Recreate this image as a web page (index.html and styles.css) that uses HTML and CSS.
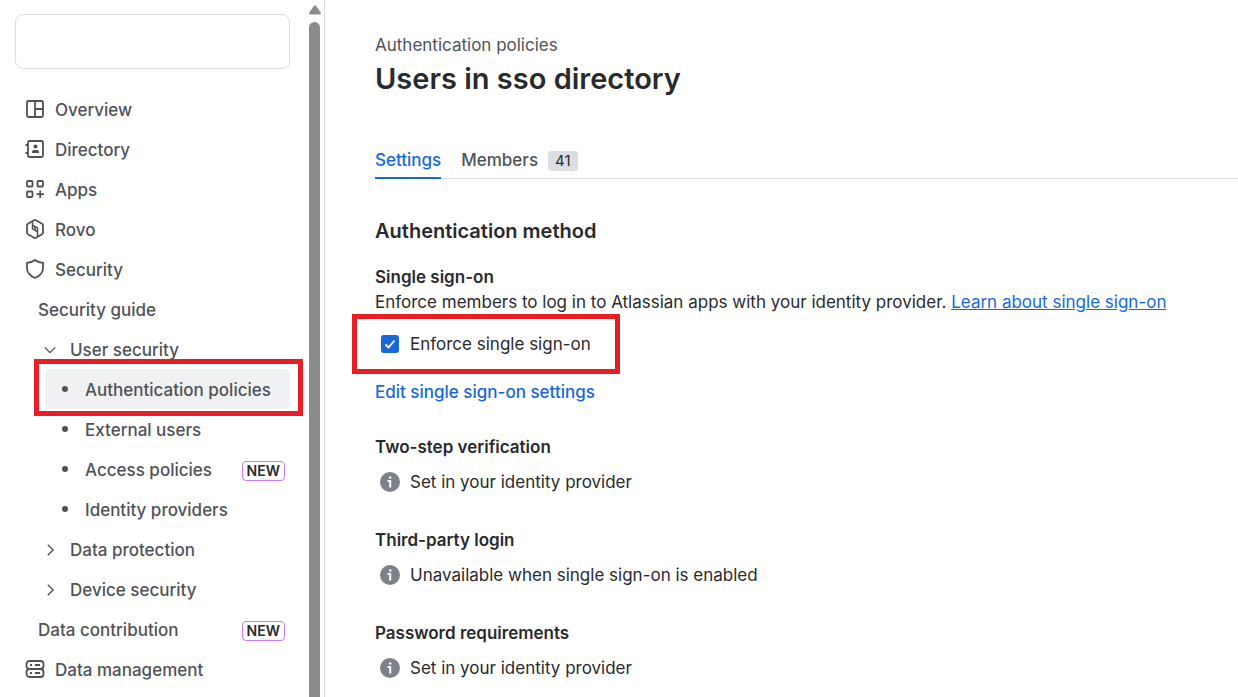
FILE: index.html
```html
<!DOCTYPE html>
<html lang="en">
<head>
    <meta charset="UTF-8">
    <meta name="viewport" content="width=device-width, initial-scale=1.0">
    <title>Authentication policies</title>
    <link rel="stylesheet" href="styles.css">
</head>
<body>
    <aside class="sidebar">
        <nav class="nav">
            <button class="org-switcher" type="button" aria-label="Switch organization"></button>
            <ul class="menu">
                <li><a class="item" href="#">
                    <svg class="icon" viewBox="0 0 20 20"><rect x="2" y="2" width="16" height="16" rx="1.5"/><path d="M10 2v16M10 10h8"/></svg>
                    Overview</a></li>
                <li><a class="item" href="#">
                    <svg class="icon" viewBox="0 0 20 20"><rect x="3" y="2" width="15" height="16" rx="1.5"/><path d="M0.5 6H3M0.5 14H3"/><circle class="solid" cx="10.5" cy="7.5" r="2"/><path class="solid" d="M7 14v-1.2c0-1.2.9-1.8 2-1.8h3c1.1 0 2 .6 2 1.8V14z"/></svg>
                    Directory</a></li>
                <li><a class="item" href="#">
                    <svg class="icon" viewBox="0 0 20 20"><rect x="2" y="2" width="5.5" height="5.5" rx="1"/><rect x="12.5" y="2" width="5.5" height="5.5" rx="1"/><rect x="2" y="12.5" width="5.5" height="5.5" rx="1"/><path d="M15.2 11.5v7.5M11.5 15.2H19"/></svg>
                    Apps</a></li>
                <li><a class="item" href="#">
                    <svg class="icon" viewBox="0 0 20 20"><path d="M9 1.300a2 2 0 0 1 2 0l6 3.500a2 2 0 0 1 1 1.800v6.800a2 2 0 0 1-1 1.800l-6 3.500a2 2 0 0 1-2 0l-6-3.500a2 2 0 0 1-1-1.800V6.600a2 2 0 0 1 1-1.800z"/><path class="thin" d="M7.500 2.500v7.300l5 3V18M7.500 6.200l5 2.800v4M10 7.600v3.800"/></svg>
                    Rovo</a></li>
                <li><a class="item" href="#">
                    <svg class="icon" viewBox="0 0 20 20"><path d="M10 1c2 1.700 4.500 2.600 8 2.800v5.200c0 4.500-3 8-8 10-5-2-8-5.500-8-10V3.800C5.500 3.600 8 2.700 10 1z"/></svg>
                    Security</a>
                    <ul class="submenu">
                        <li><a class="item" href="#">Security guide</a></li>
                        <li><a class="item group" href="#">
                            <svg class="chevron" viewBox="0 0 16 16"><path d="M2 5l6 6 6-6"/></svg>
                            User security</a>
                            <ul class="leaves">
                                <li><a class="item leaf selected" href="#" aria-current="page"><span class="dot"></span>Authentication policies</a></li>
                                <li><a class="item leaf" href="#"><span class="dot"></span>External users</a></li>
                                <li><a class="item leaf" href="#"><span class="dot"></span>Access policies<span class="lozenge">NEW</span></a></li>
                                <li><a class="item leaf" href="#"><span class="dot"></span>Identity providers</a></li>
                            </ul>
                        </li>
                        <li><a class="item group" href="#">
                            <svg class="chevron" viewBox="0 0 16 16"><path d="M5.500 2l6 6-6 6"/></svg>
                            Data protection</a></li>
                        <li><a class="item group" href="#">
                            <svg class="chevron" viewBox="0 0 16 16"><path d="M5.500 2l6 6-6 6"/></svg>
                            Device security</a></li>
                        <li><a class="item" href="#">Data contribution<span class="lozenge">NEW</span></a></li>
                    </ul>
                </li>
                <li><a class="item" href="#">
                    <svg class="icon" viewBox="0 0 20 20"><rect x="1.500" y="2" width="17" height="8" rx="3"/><rect x="1.500" y="10" width="17" height="8" rx="3"/><path d="M5 6h2M10 6h5M5 14h2M10 14h5"/></svg>
                    Data management</a></li>
            </ul>
        </nav>
        <div class="scrollbar">
            <svg class="scroll-up" viewBox="0 0 12 10"><path d="M5 .8a1.300 1.300 0 0 1 2 0l4.700 6.700c.6 1-.1 2-1 2H1.300c-.9 0-1.600-1-1-2z"/></svg>
            <div class="scroll-thumb"></div>
        </div>
    </aside>

    <main class="content">
        <a class="breadcrumb" href="#">Authentication policies</a>
        <h1>Users in sso directory</h1>

        <div class="tabs" role="tablist">
            <button class="tab active" type="button" role="tab" aria-selected="true">Settings</button>
            <button class="tab" type="button" role="tab" aria-selected="false">Members <span class="badge">41</span></button>
        </div>

        <h2>Authentication method</h2>

        <section class="setting sso">
            <h3>Single sign-on</h3>
            <p>Enforce members to log in to Atlassian apps with your identity provider. <a class="learn" href="#">Learn about single sign-on</a></p>
            <label class="check" for="enforceSso">
                <input type="checkbox" id="enforceSso" checked>
                Enforce single sign-on
            </label>
            <a class="edit" href="#">Edit single sign-on settings</a>
        </section>

        <section class="setting">
            <h3>Two-step verification</h3>
            <p class="info"><svg class="info-icon" viewBox="0 0 20 20"><circle cx="10" cy="10" r="10"/><path d="M7.500 9h2.700v6.500"/><path d="M9 5.500h2.400"/></svg>Set in your identity provider</p>
        </section>

        <section class="setting">
            <h3>Third-party login</h3>
            <p class="info"><svg class="info-icon" viewBox="0 0 20 20"><circle cx="10" cy="10" r="10"/><path d="M7.500 9h2.700v6.500"/><path d="M9 5.500h2.400"/></svg>Unavailable when single sign-on is enabled</p>
        </section>

        <section class="setting">
            <h3>Password requirements</h3>
            <p class="info"><svg class="info-icon" viewBox="0 0 20 20"><circle cx="10" cy="10" r="10"/><path d="M7.500 9h2.700v6.500"/><path d="M9 5.500h2.400"/></svg>Set in your identity provider</p>
        </section>
    </main>
</body>
</html>
```
FILE: styles.css
```css
* {
    box-sizing: border-box;
}
body {
    display: flex;
    height: 100vh;
    margin: 0;
    overflow: hidden;
    background-color: #fff;
    color: #292a2e;
    font-family: Inter, sans-serif;
    font-size: 17px;
    line-height: 24px;
}
h1, h2, h3, p, ul {
    margin: 0;
    padding: 0;
}
ul {
    list-style: none;
}
a {
    color: #1868db;
    text-decoration: none;
}
button {
    font: inherit;
    background: none;
    border: none;
    cursor: pointer;
}

/* Sidebar */
.sidebar {
    display: flex;
    flex: 0 0 325px;
    border-right: 1px solid #dddee1;
    overflow: hidden;
}
.nav {
    flex: 1;
    padding: 14px 19px 0 15px;
}
.org-switcher {
    display: block;
    width: 100%;
    height: 55px;
    border: 1px solid #dddee1;
    border-radius: 8px;
}
.menu {
    margin-top: 20px;
}
.item {
    display: flex;
    align-items: center;
    height: 40px;
    padding: 2px 5px 0 10px;
    border-radius: 5px;
    color: #505258;
    font-weight: 500;
    white-space: nowrap;
}
.icon {
    width: 20px;
    height: 20px;
    margin-right: 10px;
    margin-bottom: 2px;
    fill: none;
    stroke: #505258;
    stroke-width: 1.8;
}
.icon .solid {
    fill: #505258;
    stroke: none;
}
.icon .thin {
    stroke-width: 1.5;
}
.submenu {
    padding-left: 15px;
}
.submenu .item {
    padding-left: 8px;
}
.submenu .group {
    padding-left: 13px;
}
.chevron {
    width: 14px;
    height: 14px;
    margin-right: 13px;
    fill: none;
    stroke: #505258;
    stroke-width: 1.6;
}
.leaves {
    padding-left: 15px;
}
.leaves .leaf {
    position: relative;
    padding-left: 17px;
}
.dot {
    width: 6px;
    height: 6px;
    margin-right: 17px;
    margin-bottom: 2px;
    border-radius: 50%;
    background-color: #505258;
}
.selected {
    background-color: #f0f1f2;
}
.selected::after {
    content: "";
    position: absolute;
    inset: -10px -13px -7px -11px;
    border: 5px solid #e81e25;
}
.lozenge {
    margin-top: 2px;
    margin-left: auto;
    padding: 0 4px;
    border: 1px solid #c97cf4;
    border-radius: 4px;
    color: #292a2e;
    font-size: 14px;
    font-weight: 600;
    line-height: 18px;
}
.scrollbar {
    display: flex;
    flex-direction: column;
    flex: 0 0 15px;
    gap: 7px;
    padding-top: 5px;
}
.scroll-up {
    width: 12px;
    height: 10px;
    fill: #8b8b8b;
}
.scroll-thumb {
    flex: 1;
    width: 11px;
    border-radius: 6px 6px 0 0;
    background-color: #8b8b8b;
}

/* Content */
.content {
    flex: 1;
    min-width: 0;
    padding: 33px 0 0 50px;
}
.breadcrumb {
    display: block;
    color: #505258;
}
h1 {
    margin-top: 4px;
    font-size: 29px;
    font-weight: 600;
    line-height: 36px;
}
.tabs {
    display: flex;
    gap: 20px;
    margin-top: 44px;
    border-bottom: 1px solid #dddee1;
}
.tab {
    display: flex;
    align-items: center;
    gap: 10px;
    height: 38px;
    margin-bottom: -1px;
    padding: 0;
    color: #505258;
    font-weight: 500;
}
.tab.active {
    color: #1868db;
    border-bottom: 2px solid #1868db;
    border-top: 2px solid transparent;
}
.badge {
    margin-top: 2px;
    padding: 0 7px;
    border-radius: 3px;
    background-color: #dddee1;
    color: #292a2e;
    font-size: 15px;
    font-weight: 400;
    line-height: 20px;
}
h2 {
    margin-top: 40px;
    font-size: 20px;
    font-weight: 600;
    line-height: 24px;
}
h3 {
    font-size: 17px;
    font-weight: 600;
    line-height: 24px;
}
h3 + p {
    margin-top: 1px;
}
.setting {
    margin-top: 34px;
}
.setting.sso {
    margin-top: 22px;
}
.learn {
    text-decoration: underline;
}
.check {
    position: relative;
    display: flex;
    align-items: center;
    gap: 11px;
    width: fit-content;
    margin-top: 18px;
    padding-left: 6px;
}
.check::after {
    content: "";
    position: absolute;
    inset: -18px -29px -18px -23px;
    border: 5px solid #e81e25;
    pointer-events: none;
}
.check input {
    appearance: none;
    width: 18px;
    height: 18px;
    margin: 0;
    border-radius: 3px;
    background: #1868db url("data:image/svg+xml,%3Csvg xmlns='http://www.w3.org/2000/svg' viewBox='0 0 18 18'%3E%3Cpath d='M4.500 9.500l3 3 6-7' fill='none' stroke='white' stroke-width='1.800'/%3E%3C/svg%3E");
}
.edit {
    display: block;
    width: fit-content;
    margin-top: 24px;
    font-weight: 500;
}
.sso + .setting {
    margin-top: 31px;
}
.setting .info {
    display: flex;
    align-items: center;
    gap: 10px;
    margin-top: 11px;
    padding-left: 5px;
}
.info-icon {
    width: 20px;
    height: 20px;
    fill: #7d818a;
}
.info-icon path {
    fill: none;
    stroke: #fff;
    stroke-width: 2;
}
```
